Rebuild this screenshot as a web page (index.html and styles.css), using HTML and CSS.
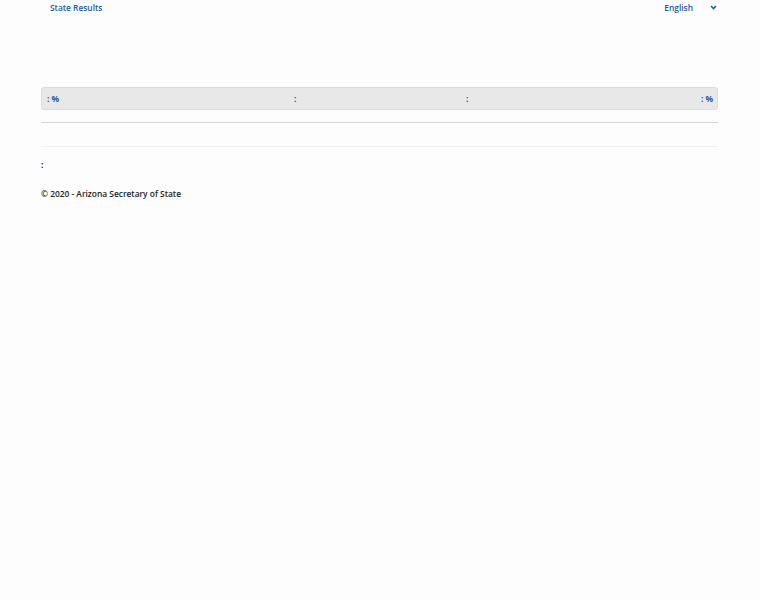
FILE: index.html
```html
<!DOCTYPE html>
<html lang="en">
<head>
<meta charset="utf-8">
<title>State Results</title>
<link rel="stylesheet" href="styles.css">
</head>
<body>
<header class="topbar">
  <a class="brand" href="#">State Results</a>
  <div class="lang">
    <span class="lang-label">English</span>
    <svg class="chev" width="7" height="5" viewBox="0 0 7 5"><path d="M1 1 L3.5 3.5 L6 1" fill="none" stroke="#1d5aa5" stroke-width="1.6"/></svg>
  </div>
</header>
<main class="container">
  <div class="summary">
    <span class="cell c1">: %</span>
    <span class="cell c2">:</span>
    <span class="cell c3">:</span>
    <span class="cell c4">: %</span>
  </div>
  <hr class="rule-dark">
  <hr class="rule-light">
  <p class="colon">:</p>
  <footer class="foot">© 2020 - Arizona Secretary of State</footer>
</main>
</body>
</html>
```
FILE: styles.css
```css
html, body {
  margin: 0;
  padding: 0;
  background: #fdfdfd;
  font-family: "Open Sans", "DejaVu Sans", sans-serif;
  font-size: 8.4px;
  color: #222;
}
.topbar {
  display: flex;
  justify-content: space-between;
  align-items: center;
  height: 15px;
  padding: 0 43px 0 50px;
}
.brand {
  color: #1d5aa5;
  text-decoration: none;
  font-weight: 600;
}
.lang {
  display: flex;
  align-items: center;
  gap: 17px;
  color: #1d5aa5;
  font-weight: 600;
}
.container {
  margin: 0 42px 0 41px;
  padding-top: 72px;
}
.summary {
  display: grid;
  grid-template-columns: 247px 172px 1fr auto;
  align-items: center;
  height: 21px;
  padding: 0 4px 0 5px;
  background: #e8e8e8;
  border: 1px solid #dcdcdc;
  border-radius: 3px;
  color: #1d5aa5;
  font-weight: 700;
}
.rule-dark {
  margin: 12px 0 0;
  border: 0;
  border-top: 1px solid #d6d6d6;
}
.rule-light {
  margin: 23px 0 0;
  border: 0;
  border-top: 1px solid #efefef;
}
.colon {
  margin: 11px 0 0;
  line-height: 13px;
  font-weight: 700;
  color: #111;
}
.foot {
  margin-top: 16px;
  line-height: 13px;
  font-weight: 600;
}
```
